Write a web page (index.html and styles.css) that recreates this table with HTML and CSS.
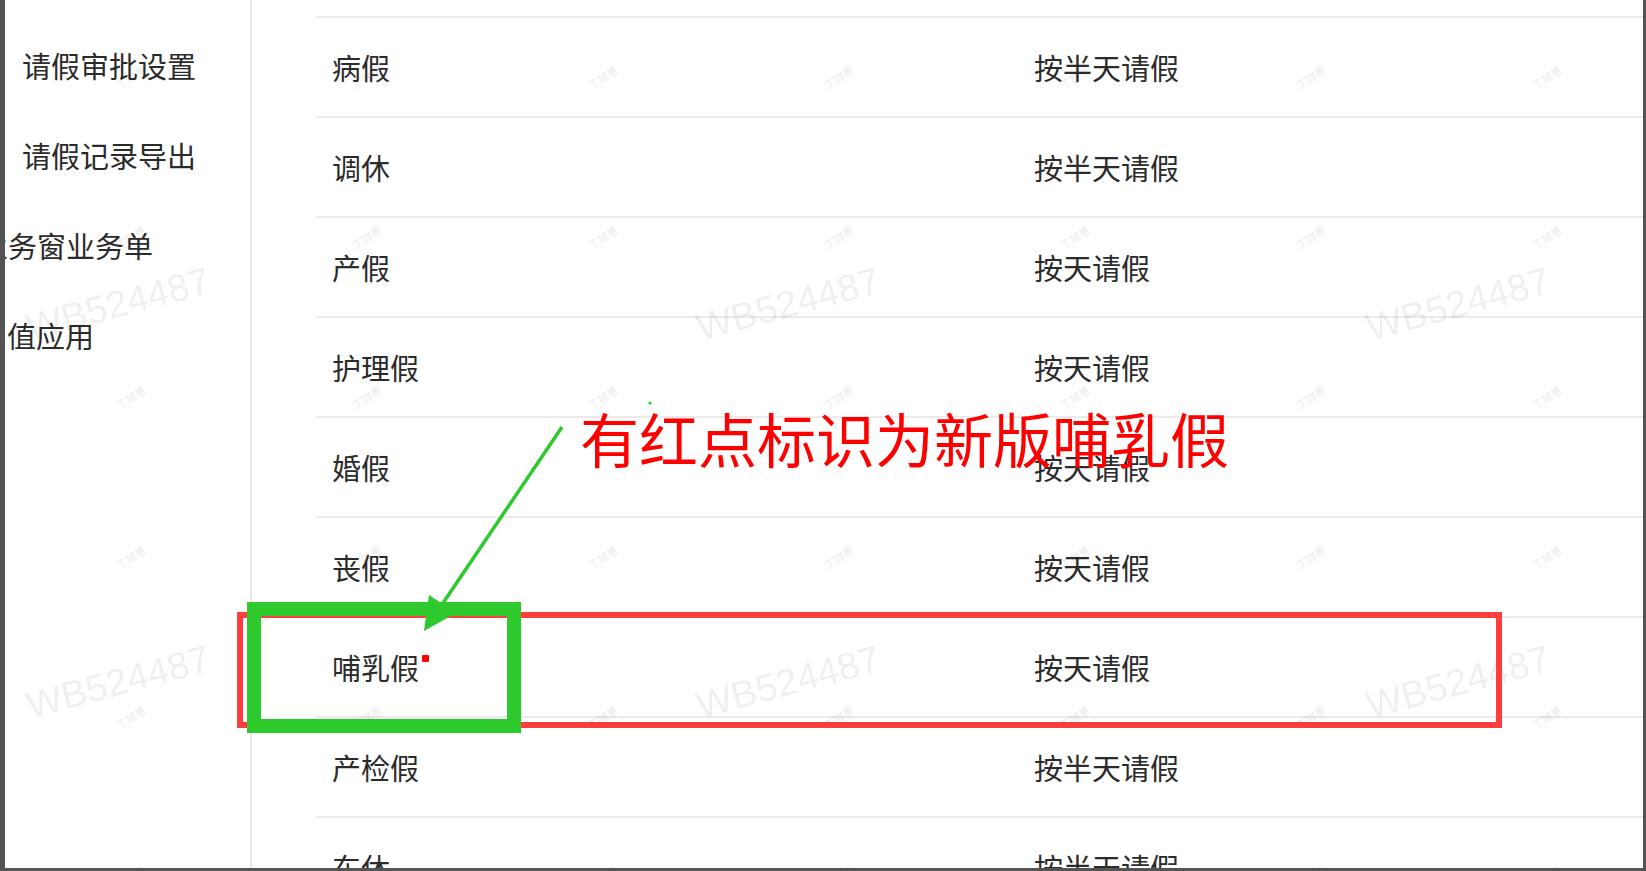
FILE: index.html
```html
<!DOCTYPE html>
<html lang="zh-CN">
<head>
    <meta charset="UTF-8">
    <meta name="viewport" content="width=device-width, initial-scale=1.0">
    <title>请假类型</title>
    <link rel="stylesheet" href="styles.css">
</head>
<body>
    <div class="frame">
        <div class="sidebar">
            <div class="menu-item sub">请假审批设置</div>
            <div class="menu-item sub">请假记录导出</div>
            <div class="menu-item cut">业务窗业务单</div>
            <div class="menu-item top">值应用</div>
        </div>

        <div class="content">
            <div class="row"><span>病假</span><span>按半天请假</span></div>
            <div class="row"><span>调休</span><span>按半天请假</span></div>
            <div class="row"><span>产假</span><span>按天请假</span></div>
            <div class="row"><span>护理假</span><span>按天请假</span></div>
            <div class="row"><span>婚假</span><span>按天请假</span></div>
            <div class="row"><span>丧假</span><span>按天请假</span></div>
            <div class="row"><span>哺乳假<i class="dot"></i></span><span>按天请假</span></div>
            <div class="row"><span>产检假</span><span>按半天请假</span></div>
            <div class="row"><span>东休</span><span>按半天请假</span></div>
        </div>

        <!-- watermarks -->
        <div class="mark-big" id="markBig"></div>
        <div class="mark-small" id="markSmall"></div>

        <!-- annotation drawn over the screenshot -->
        <div class="annot">
            <svg width="1646" height="871" viewBox="0 0 1646 871">
                <rect x="240" y="615" width="1259" height="110" fill="none" stroke="#ff3d3d" stroke-width="6"/>
                <rect x="254" y="609" width="260" height="117" fill="none" stroke="#2dc92d" stroke-width="14"/>
                <line x1="562" y1="427" x2="441" y2="606" stroke="#2dc92d" stroke-width="3.5"/>
                <polygon points="424,631 456,613 429,595" fill="#2dc92d"/>
                <circle cx="650" cy="403" r="1.6" fill="#2dc92d"/>
            </svg>
            <div class="note">有红点标识为新版哺乳假</div>
        </div>
    </div>

    <script>
        const big = document.getElementById('markBig');
        for (let i = 0; i < 6; i++) {
            big.innerHTML += '<span>WB524487</span>';
        }

        const small = document.getElementById('markSmall');
        for (let i = 0; i < 42; i++) {
            small.innerHTML += '<span>丁锦蕙</span>';
        }
    </script>
</body>
</html>
```

FILE: styles.css
```css
* {
    box-sizing: border-box;
}
body {
    margin: 0;
    font-family: "Noto Sans CJK SC", sans-serif;
    color: #2b2b2b;
    background: #fff;
}
.frame {
    position: relative;
    display: flex;
    width: 1646px;
    height: 871px;
    border-left: 5px solid #545454;
    border-right: 3px solid #545454;
    border-bottom: 3px solid #545454;
    overflow: hidden;
}
.sidebar {
    width: 247px;
    flex-shrink: 0;
    padding-top: 20px;
    border-right: 2px solid #e8e8e8;
    overflow: hidden;
}
.menu-item {
    height: 90px;
    line-height: 90px;
    font-size: 29px;
    white-space: nowrap;
}
.menu-item.sub {
    padding-left: 17px;
}
.menu-item.cut {
    text-indent: -26px;
}
.menu-item.top {
    padding-left: 2px;
}
.content {
    flex: 1;
    padding: 16px 0 0 64px;
    overflow: hidden;
}
.row {
    display: grid;
    grid-template-columns: 702px 1fr;
    align-items: center;
    height: 100px;
    padding-left: 16px;
    border-top: 2px solid #ebebeb;
    font-size: 29px;
    line-height: 40px;
    white-space: nowrap;
}
.dot {
    display: inline-block;
    width: 7px;
    height: 7px;
    margin: 8px 0 0 3px;
    background: #f00;
    border-radius: 1px;
    vertical-align: top;
}
.mark-big {
    position: absolute;
    left: -222px;
    top: 115px;
    display: grid;
    grid-template-columns: repeat(3, 670px);
    grid-auto-rows: 378px;
    pointer-events: none;
}
.mark-big span {
    justify-self: center;
    align-self: center;
    font-family: "Liberation Sans", sans-serif;
    font-size: 38px;
    color: rgba(0, 0, 0, 0.075);
    transform: rotate(-15deg);
}
.mark-small {
    position: absolute;
    left: 7px;
    top: -3px;
    display: grid;
    grid-template-columns: repeat(7, 236px);
    grid-auto-rows: 160px;
    pointer-events: none;
}
.mark-small span {
    justify-self: center;
    align-self: center;
    font-size: 11px;
    color: rgba(0, 0, 0, 0.11);
    transform: rotate(-32deg);
}
.annot {
    position: absolute;
    left: -5px;
    top: 0;
    width: 1646px;
    height: 871px;
    pointer-events: none;
}
.annot svg {
    display: block;
}
.note {
    position: absolute;
    left: 580px;
    top: 408px;
    font-size: 59px;
    line-height: 59px;
    color: #f00;
    white-space: nowrap;
}
```
